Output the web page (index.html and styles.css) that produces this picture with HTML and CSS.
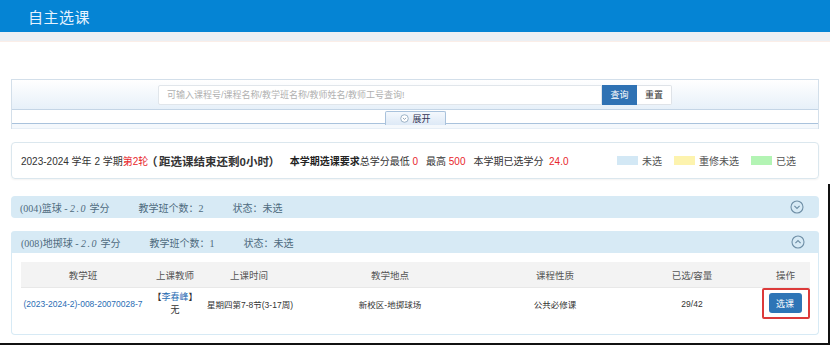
FILE: index.html
```html
<!DOCTYPE html>
<html lang="zh">
<head>
<meta charset="utf-8">
<title>自主选课</title>
<link rel="stylesheet" href="styles.css">
</head>
<body>
<header class="topbar"><span class="title">自主选课</span></header>
<div class="substrip"></div>

<section class="upper">
  <div class="search">
    <div class="search-top">
      <input class="search-input" type="text" placeholder="可输入课程号/课程名称/教学班名称/教师姓名/教师工号查询!">
      <button class="btn-query">查询</button>
      <button class="btn-reset">重置</button>
    </div>
    <div class="search-bottom">
      <div class="expand-tab">
        <svg class="expand-icon" viewBox="0 0 10 10" width="9" height="9"><circle cx="5" cy="5" r="4.2" fill="#fff" stroke="#8aa3bb" stroke-width="0.9"/><path d="M3.2 4.3 L5 6 L6.8 4.3" fill="none" stroke="#7a93ab" stroke-width="0.9"/></svg>
        <span>展开</span>
      </div>
    </div>
  </div>

  <div class="info">
    <span class="plain">2023-2024 学年 2 学期</span><span class="red">第2轮</span><span class="bold"><span class="paren">（</span>距选课结束还剩0小时）</span>
    <span class="bold2">本学期选课要求</span><span class="plain">总学分最低 <span class="red">0</span></span>
    <span class="plain gap1">最高 <span class="red">500</span></span>
    <span class="plain gap1">本学期已选学分 <span class="red">&nbsp;24.0</span></span>
    <div class="legend">
      <span class="sw sw-blue"></span><span class="lg">未选</span>
      <span class="sw sw-yellow"></span><span class="lg">重修未选</span>
      <span class="sw sw-green"></span><span class="lg">已选</span>
    </div>
  </div>
</section>

<section class="lower">
  <div class="course">
    <div class="course-head">
      <span class="ch-name">(004)篮球 - <i>2.0</i> 学分</span>
      <span class="ch-item">教学班个数：2</span>
      <span class="ch-item">状态：未选</span>
      <svg class="chev" viewBox="0 0 14 14" width="14" height="14"><circle cx="7" cy="7" r="6" fill="none" stroke="#6f8fa6" stroke-width="1.1"/><path d="M4.4 5.8 L7 8.4 L9.6 5.8" fill="none" stroke="#6f8fa6" stroke-width="1.2"/></svg>
    </div>
  </div>

  <div class="course open">
    <div class="course-head">
      <span class="ch-name">(008)地掷球 - <i>2.0</i> 学分</span>
      <span class="ch-item">教学班个数：1</span>
      <span class="ch-item">状态：未选</span>
      <svg class="chev" viewBox="0 0 14 14" width="14" height="14"><circle cx="7" cy="7" r="6" fill="none" stroke="#6f8fa6" stroke-width="1.1"/><path d="M4.4 8.2 L7 5.6 L9.6 8.2" fill="none" stroke="#6f8fa6" stroke-width="1.2"/></svg>
    </div>
    <div class="course-body">
      <div class="tbl">
        <div class="th">教学班</div>
        <div class="th">上课教师</div>
        <div class="th">上课时间</div>
        <div class="th">教学地点</div>
        <div class="th">课程性质</div>
        <div class="th">已选/容量</div>
        <div class="th">操作</div>

        <div class="td"><a class="link" href="#">(2023-2024-2)-008-20070028-7</a></div>
        <div class="td teacher"><span>【<a class="link" href="#">李春峰</a>】</span><span>无</span></div>
        <div class="td left">星期四第7-8节(3-17周)</div>
        <div class="td">新校区-地掷球场</div>
        <div class="td">公共必修课</div>
        <div class="td">29/42</div>
        <div class="td"><span class="mark"><button class="btn-pick">选课</button></span></div>
      </div>
    </div>
  </div>
</section>
</body>
</html>
```

FILE: styles.css
```css
* { box-sizing: border-box; }
body {
  margin: 0;
  background: #fff;
  font-family: "Liberation Sans", "Noto Sans CJK SC", sans-serif;
  color: #333;
  width: 830px;
  height: 346px;
  overflow: hidden;
}
.topbar {
  height: 32px;
  background: #0584d4;
  padding-left: 28px;
  display: flex;
  align-items: center;
}
.title {
  color: #e6f3ff;
  font-size: 15px;
  letter-spacing: 0.5px;
}
.substrip {
  height: 10px;
  background: #eceff3;
  border-bottom: 1px solid #fbeee8;
}
.upper {
  padding: 37px 11px 0 11px;
}
.search {
  border: 1px solid #d3dfea;
  border-bottom: none;
}
.search-top {
  height: 30px;
  display: flex;
  align-items: center;
  justify-content: center;
  background: linear-gradient(#ffffff, #e7f0f9);
  border-bottom: 1px solid #c4d5e6;
}
.search-input {
  width: 444px;
  height: 20px;
  border: 1px solid #e1e6eb;
  border-radius: 2px 0 0 2px;
  padding: 0 8px;
  font-family: "Liberation Sans", "Noto Sans CJK SC", sans-serif;
  font-size: 9px;
  color: #555;
  background: #fff;
  outline: none;
}
.search-input::placeholder { color: #b0b0b0; }
.btn-query {
  width: 35px;
  height: 20px;
  border: none;
  background: #2f72b4;
  color: #fff;
  font-size: 9px;
  font-family: "Liberation Sans", "Noto Sans CJK SC", sans-serif;
  padding: 0;
}
.btn-reset {
  width: 35px;
  height: 20px;
  border: 1px solid #dfe3e8;
  border-left: none;
  border-radius: 0 2px 2px 0;
  background: #fff;
  color: #333;
  font-size: 9px;
  font-family: "Liberation Sans", "Noto Sans CJK SC", sans-serif;
  padding: 0;
}
.search-bottom {
  height: 19px;
  border-bottom: 1px solid #e6eef6;
  background: linear-gradient(#fff 0, #fff 13px, #a9c2dc 13px, #a9c2dc 14px, #f4f8fc 14px);
  display: flex;
  justify-content: center;
  padding-left: 1px;
}
.expand-tab {
  width: 61px;
  height: 14px;
  border: 1px solid #a9c2dc;
  border-bottom: none;
  border-radius: 2px 2px 0 0;
  background: linear-gradient(#f4f8fd, #dde9f6);
  display: flex;
  align-items: center;
  justify-content: center;
  gap: 3px;
  font-size: 9px;
  color: #335;
  margin-top: 1px;
}
.expand-icon { display: block; }
.info {
  margin-top: 13px;
  height: 37px;
  border: 1px solid #dbe7ee;
  border-radius: 4px;
  box-shadow: 0 1px 2px rgba(0,0,0,0.05);
  display: flex;
  align-items: center;
  padding-left: 9px;
  font-size: 10px;
  white-space: nowrap;
}
.plain { color: #333; }
.red { color: #e8262b; }
.bold {
  font-weight: bold;
  font-size: 11.5px;
  color: #333;
  font-feature-settings: "palt";
}
.paren { margin-left: 3px; margin-right: 2px; }
.bold2 {
  font-weight: bold;
  font-size: 10px;
  margin-left: 15px;
  color: #222;
}
.gap1 { margin-left: 8px; }
.legend {
  margin-left: auto;
  margin-right: 22px;
  display: flex;
  align-items: center;
}
.sw {
  width: 21px;
  height: 9px;
  display: inline-block;
  margin-left: 12px;
  margin-right: 4px;
}
.sw:first-child { margin-left: 0; }
.sw-blue { background: #d3e8f5; }
.sw-yellow { background: #fdf3ae; }
.sw-green { background: #b3f4b4; }
.lg { color: #555; font-size: 10px; }

.lower {
  padding: 12px 9px 8px 11px;
  border-right: 2px solid #111;
  border-bottom: 2px solid #111;
  margin-top: 5px;
}
.course {
  border-radius: 4px;
  background: #d7eaf5;
}
.course + .course { margin-top: 13px; }
.course-head {
  height: 22px;
  display: flex;
  align-items: center;
  padding: 0 15px 0 9px;
  font-family: "Liberation Serif", "Noto Sans CJK SC", serif;
  font-size: 10px;
  color: #4e6a7e;
  white-space: nowrap;
}
.ch-name i { font-style: italic; letter-spacing: 1.5px; }
.ch-item { margin-left: 29px; }
.chev { margin-left: auto; display: block; }
.course.open { background: #fff; border: 1px solid #d7eaf5; border-top: none; }
.course.open .course-head { background: #d7eaf5; border-radius: 4px 4px 0 0; margin: 0 -1px; padding-left: 10px; padding-right: 14px; }
.course-body {
  padding: 9px 8px 15px 9px;
}
.tbl {
  display: grid;
  grid-template-columns: 124px 60px 88px 194px 136px 138px 49px;
  font-size: 8.5px;
}
.th {
  height: 26px;
  background: #f3f3f3;
  border-bottom: 1px solid #e8e8e8;
  display: flex;
  align-items: center;
  justify-content: center;
  color: #555;
  font-size: 9.5px;
}
.td {
  height: 31px;
  display: flex;
  align-items: center;
  justify-content: center;
  color: #333;
  white-space: nowrap;
}
.td.left { justify-content: flex-start; padding-left: 2px; }
.teacher {
  flex-direction: column;
  line-height: 13px;
  font-size: 9px;
}
.link { color: #2a6db4; text-decoration: none; }
.mark {
  display: inline-block;
  border: 2px solid #dc3a3a;
  border-radius: 2px;
  padding: 3px 6px 4px 5px;
}
.btn-pick {
  display: block;
  width: 33px;
  height: 20px;
  border: none;
  border-radius: 3px;
  background: #2e75b6;
  color: #fff;
  font-size: 9px;
  font-family: "Liberation Sans", "Noto Sans CJK SC", sans-serif;
  padding: 0;
}
```
